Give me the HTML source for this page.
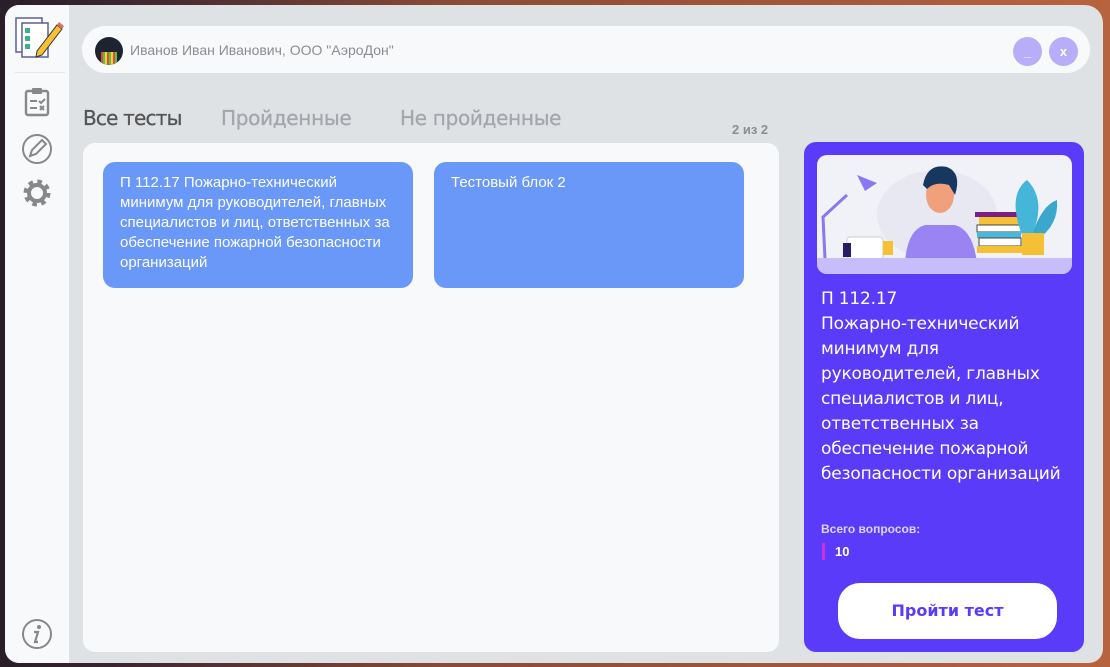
<!DOCTYPE html><html><head><meta charset="utf-8"><style>
*{margin:0;padding:0;box-sizing:border-box}
body{width:1110px;height:667px;overflow:hidden;font-family:"Liberation Sans","DejaVu Sans",sans-serif;background:linear-gradient(90deg,#2a1e28 0%,#3a2430 10%,#8a4a35 40%,#b8633f 100%);position:relative}
.win{position:absolute;left:5px;top:5px;width:1098px;height:658px;background:#dfe2e5;border-radius:14px 18px 14px 14px;overflow:hidden}
.side{position:absolute;left:0;top:0;width:64px;height:658px;background:#f7f9fb}
.hdr{position:absolute;left:77px;top:21px;width:1008px;height:47px;background:#f7f9fb;border-radius:24px}
.av{position:absolute;left:13px;top:11px;width:28px;height:28px;border-radius:50%;background:#1d2430;overflow:hidden}
.name{position:absolute;left:48px;top:16px;font-size:14px;color:#8a8d92}
.btn{position:absolute;top:11px;width:29px;height:29px;border-radius:50%;background:#b7adf9;color:#fff;font-size:13px;text-align:center;line-height:29px;font-weight:bold}
.tab{position:absolute;top:101px;font-size:20px;color:#a3a6aa;font-family:"DejaVu Sans",sans-serif;letter-spacing:-0.3px;white-space:nowrap;-webkit-text-stroke:0.3px}
.panel{position:absolute;left:78px;top:138px;width:696px;height:509px;background:#f7f9fb;border-radius:12px}
.card{position:absolute;top:19px;width:310px;height:126px;background:#6a98f8;border-radius:12px;color:#fff;font-size:15px;line-height:20px;padding:11px 17px;font-family:"Liberation Sans",sans-serif;white-space:nowrap}
.rp{position:absolute;left:799px;top:137px;width:280px;height:510px;background:#5a3bfa;border-radius:12px}
.img{position:absolute;left:13px;top:13px;width:255px;height:119px;border-radius:10px;background:#f1f1f8;overflow:hidden}
.rt{position:absolute;left:17px;top:145px;width:262px;color:#fff;font-size:17px;line-height:25px;font-family:"DejaVu Sans",sans-serif;letter-spacing:-0.2px;white-space:nowrap}
.go{position:absolute;left:34px;top:441px;width:219px;height:56px;background:#fff;border-radius:22px;color:#5a3bfa;font-weight:bold;font-size:16px;text-align:center;line-height:56px;font-family:"DejaVu Sans",sans-serif}
</style></head><body>
<div class="win">
<div class="side">
<svg style="position:absolute;left:8px;top:10px" width="52" height="50" viewBox="0 0 52 50"><rect x="3" y="3" width="26" height="34" fill="#fff" stroke="#5a5f9a" stroke-width="1.5"/><rect x="9" y="8" width="26" height="34" fill="#fff" stroke="#5a5f9a" stroke-width="1.5"/><rect x="12" y="13" width="5" height="5" fill="#3cb08a"/><rect x="12" y="21" width="5" height="5" fill="#3cb08a"/><rect x="12" y="29" width="5" height="5" fill="#3cb08a"/><path d="M24 36 L44 10 L49 14 L29 40 L23 42Z" fill="#f5c033" stroke="#333" stroke-width="1"/><path d="M44 10 L46 7 L51 11 L49 14Z" fill="#e06a6a"/></svg>
<div style="position:absolute;left:10px;top:67px;width:50px;height:1px;background:#e3e6ea"></div>
<svg style="position:absolute;left:19px;top:82px" width="26" height="30" viewBox="0 0 26 30"><rect x="2" y="4" width="22" height="24" rx="2" fill="none" stroke="#888" stroke-width="2.4"/><rect x="8" y="1" width="10" height="6" rx="1" fill="#888"/><path d="M6 14h7M6 21h7M15 14l2 2 4-4M16 19l4 4M20 19l-4 4" stroke="#888" stroke-width="2" fill="none"/></svg>
<svg style="position:absolute;left:16px;top:128px" width="32" height="32" viewBox="0 0 32 32"><circle cx="16" cy="16" r="14" fill="none" stroke="#888" stroke-width="2"/><path d="M9 23l2-6 10-10 4 4-10 10z" fill="none" stroke="#888" stroke-width="2"/></svg>
<svg style="position:absolute;left:17px;top:173px" width="30" height="30" viewBox="0 0 30 30"><circle cx="15" cy="15" r="10" fill="none" stroke="#888" stroke-width="7" stroke-dasharray="4 3.85"/><circle cx="15" cy="15" r="8" fill="none" stroke="#888" stroke-width="4"/></svg>
<svg style="position:absolute;left:16px;top:613px" width="32" height="32" viewBox="0 0 32 32"><circle cx="16" cy="16" r="14" fill="none" stroke="#888" stroke-width="2"/><circle cx="18" cy="9" r="2" fill="#888"/><path d="M13 14h4l-3 10h3" stroke="#888" stroke-width="2.2" fill="none"/></svg>
</div>
<div class="hdr"><div class="av"><div style="position:absolute;left:6px;top:15px;width:16px;height:13px;background:repeating-linear-gradient(90deg,#e44 0 2px,#4c4 2px 4px,#fc3 4px 6px)"></div></div>
<div class="name">Иванов Иван Иванович, ООО "АэроДон"</div>
<div class="btn" style="left:931px">_</div><div class="btn" style="left:967px">x</div></div>
<div class="tab" style="left:78px;color:#555;letter-spacing:-0.8px">Все тесты</div>
<div class="tab" style="left:216px">Пройденные</div>
<div class="tab" style="left:395px">Не пройденные</div>
<div style="position:absolute;left:727px;top:117px;font-size:13px;font-weight:bold;color:#8a8d92">2 из 2</div>
<div class="panel">
<div class="card" style="left:20px">П 112.17 Пожарно-технический<br>минимум для руководителей, главных<br>специалистов и лиц, ответственных за<br>обеспечение пожарной безопасности<br>организаций</div>
<div class="card" style="left:351px">Тестовый блок 2</div>
</div>
<div class="rp">
<div class="img"><svg width="255" height="119" viewBox="0 0 255 119">
<ellipse cx="120" cy="60" rx="60" ry="45" fill="#e8e8f3"/>
<path d="M8 104 L6 62 L30 40" stroke="#8b78f0" stroke-width="3" fill="none"/><path d="M40 20 L60 28 L48 36Z" fill="#8b78f0"/>
<rect x="30" y="82" width="36" height="22" rx="3" fill="#fff" stroke="#ccd" /><rect x="26" y="88" width="8" height="14" fill="#2a1a6a"/>
<rect x="66" y="86" width="10" height="14" fill="#f5c033"/>
<path d="M88 108 Q90 75 108 70 L138 70 Q156 75 160 108Z" fill="#9a84f3"/>
<ellipse cx="123" cy="40" rx="14" ry="18" fill="#f0a07a"/><path d="M106 30 Q110 8 130 12 Q145 18 138 40 L132 30 Q118 26 110 34Z" fill="#17375e"/>
<rect x="158" y="57" width="46" height="5" fill="#7a1f88"/><rect x="162" y="62" width="42" height="8" fill="#f5c033"/><rect x="160" y="70" width="46" height="7" fill="#fff" stroke="#444"/><rect x="160" y="77" width="44" height="6" fill="#4bb8d8"/><rect x="162" y="83" width="42" height="8" fill="#fff" stroke="#444"/><rect x="160" y="91" width="46" height="7" fill="#f5c033"/>
<path d="M205 80 Q190 40 210 25 Q230 45 215 80Z" fill="#45b6d9"/><path d="M215 80 Q225 50 240 45 Q242 70 220 85Z" fill="#3aa7cc"/><rect x="205" y="78" width="22" height="22" fill="#f5c033"/>
<rect x="0" y="103" width="255" height="16" fill="#c7bdfa"/></svg></div>
<div class="rt">П 112.17<br>Пожарно-технический<br>минимум для<br>руководителей, главных<br>специалистов и лиц,<br>ответственных за<br>обеспечение пожарной<br>безопасности организаций</div>
<div style="position:absolute;left:17px;top:380px;color:#dcd6ff;font-size:12px;font-weight:bold">Всего вопросов:</div>
<div style="position:absolute;left:18px;top:401px;width:3px;height:17px;background:#d22fe0"></div>
<div style="position:absolute;left:31px;top:402px;color:#fff;font-size:13px;font-weight:bold">10</div>
<div class="go">Пройти тест</div>
</div>
</div>
</body></html>
